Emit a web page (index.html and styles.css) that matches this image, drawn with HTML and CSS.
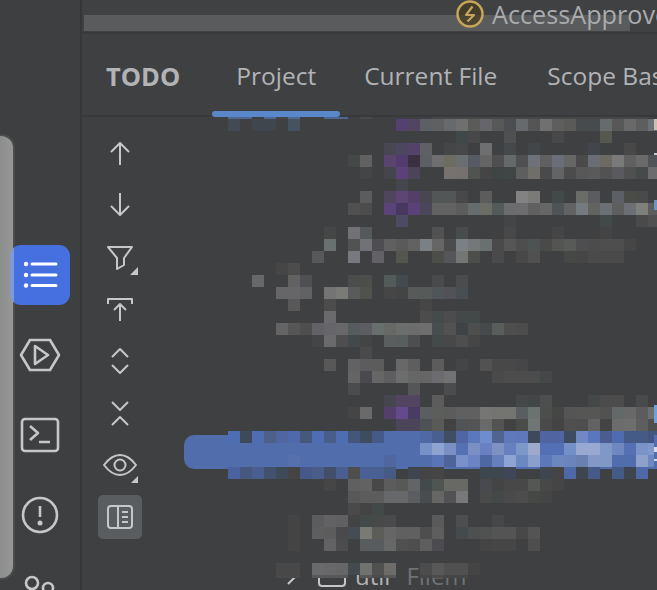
FILE: index.html
```html
<!DOCTYPE html>
<html>
<head>
    <meta charset="UTF-8">
    <meta name="viewport" content="width=device-width, initial-scale=1.0">
    <title>TODO</title>
    <link rel="stylesheet" href="styles.css">
</head>
<body>
    <div class="rail">
        <div class="rail-handle"></div>
        <button class="rail-btn rail-btn-on">
            <svg viewBox="0 0 60 60">
                <path d="M22 19H46M22 30H46M22 40.5H46" class="line-white"/>
                <circle cx="16" cy="19" r="2.2" class="dot-white"/>
                <circle cx="16" cy="30" r="2.2" class="dot-white"/>
                <circle cx="16" cy="40.5" r="2.2" class="dot-white"/>
            </svg>
        </button>
        <button class="rail-btn">
            <svg viewBox="0 0 60 60">
                <path d="M20 15H40L49 30L40 45H20L11 30Z" class="line-thick"/>
                <path d="M25 21L38 30L25 39Z" class="line-thick"/>
            </svg>
        </button>
        <button class="rail-btn">
            <svg viewBox="0 0 60 60">
                <rect x="12" y="14" width="36" height="32" rx="3" class="line-thick"/>
                <path d="M20 21L28 28L20 35M29 37H40" class="line-thick"/>
            </svg>
        </button>
        <button class="rail-btn">
            <svg viewBox="0 0 60 60">
                <circle cx="30" cy="30" r="17" class="line-thick"/>
                <path d="M30 21V32" class="line-thick"/>
                <circle cx="30" cy="38" r="2.5" class="dot-grey"/>
            </svg>
        </button>
        <button class="rail-btn">
            <svg viewBox="0 0 60 60">
                <circle cx="22" cy="18" r="6" class="line-thick"/>
                <circle cx="38" cy="23" r="5" class="line-thick"/>
                <path d="M11 38C11 30 33 30 33 38" class="line-thick"/>
            </svg>
        </button>
    </div>

    <div class="main">
        <div class="topbar">
            <div class="search-bar"></div>
            <div class="crumb">
                <svg class="crumb-icon" viewBox="0 0 28 28">
                    <circle cx="14" cy="14" r="12.5" class="bolt-ring"/>
                    <path d="M16.5 6.5L10 15H18L11.5 21.5" class="bolt"/>
                </svg>
                <span>AccessApprove</span>
            </div>
        </div>

        <div class="tabs">
            <span class="tabs-title">TODO</span>
            <span class="tab tab-on">Project</span>
            <span class="tab">Current File</span>
            <span class="tab tab-last">Scope Based</span>
        </div>

        <div class="content">
            <div class="tools">
                <button class="tool">
                    <svg viewBox="0 0 44 44"><path d="M22 35V13M13 22L22 13L31 22" class="line"/></svg>
                </button>
                <button class="tool">
                    <svg viewBox="0 0 44 44"><path d="M22 11V33M13 24L22 33L31 24" class="line"/></svg>
                </button>
                <button class="tool">
                    <svg viewBox="0 0 44 44">
                        <path d="M10 13H34L26 24V31L19 35V24Z" class="line"/>
                        <path d="M40 33V41H32Z" class="fill"/>
                    </svg>
                </button>
                <button class="tool">
                    <svg viewBox="0 0 44 44"><path d="M10 18V13H34V18M22 35V18M16 24L22 18L28 24" class="line"/></svg>
                </button>
                <button class="tool">
                    <svg viewBox="0 0 44 44"><path d="M14 19L22 11L30 19M14 27L22 35L30 27" class="line"/></svg>
                </button>
                <button class="tool">
                    <svg viewBox="0 0 44 44"><path d="M14 12L22 20L30 12M14 35L22 27L30 35" class="line"/></svg>
                </button>
                <button class="tool">
                    <svg viewBox="0 0 44 44">
                        <path d="M6 23C12 15 17 13 22 13S32 15 38 23C32 31 27 33 22 33S12 31 6 23Z" class="line"/>
                        <circle cx="22" cy="23" r="5.5" class="line"/>
                        <path d="M40 34V41H33Z" class="fill"/>
                    </svg>
                </button>
                <button class="tool tool-on">
                    <svg viewBox="0 0 44 44">
                        <rect x="10" y="11" width="24" height="22" rx="3" class="line"/>
                        <path d="M20 11V33M24 17H30M24 22H30M24 27H30" class="line"/>
                    </svg>
                </button>
            </div>

            <div class="tree">
                <div class="tree-selected"></div>
                <div class="tree-row">
                    <svg class="tree-arrow" viewBox="0 0 14 18"><path d="M3 1L11 9L3 17" class="line"/></svg>
                    <svg class="tree-folder" viewBox="0 0 28 22"><rect x="1" y="1" width="26" height="20" rx="3" class="line"/></svg>
                    <span class="tree-name">util</span>
                    <span class="tree-note">Filem</span>
                </div>
                <div class="mosaic" id="mosaic"></div>
                <div class="tree-edge"></div>
            </div>
        </div>
    </div>

    <script src="mosaic.js"></script>
</body>
</html>
```

FILE: styles.css
```css
* {
    box-sizing: border-box;
}
html, body {
    height: 100%;
}
body {
    margin: 0;
    display: flex;
    overflow: hidden;
    background-color: #3f4042;
    font-family: "Open Sans", "Noto Sans", sans-serif;
    color: #b1b3b5;
}
button {
    border: none;
    padding: 0;
    background: none;
    display: block;
}
svg {
    display: block;
}

/* left rail */
.rail {
    position: relative;
    flex: 0 0 82px;
    padding: 245px 0 0 10px;
    display: flex;
    flex-direction: column;
    gap: 20px;
    overflow: hidden;
    background-color: #3e3f41;
    border-right: 2px solid #353638;
}
.rail-handle {
    position: absolute;
    left: 0;
    top: 134px;
    width: 15px;
    height: 446px;
    background: linear-gradient(90deg, #8c8d8d, #979797);
    border: solid #4c4c4d;
    border-width: 2px 2px 2px 0;
    border-radius: 0 14px 14px 0;
}
.rail-btn {
    position: relative;
    flex: 0 0 60px;
    width: 60px;
    height: 60px;
    border-radius: 11px;
}
.rail-btn-on {
    background: linear-gradient(90deg, #7f9ad8 4px, #4670e0 4px);
}

/* icon strokes */
.line, .line-thick, .line-white, .bolt-ring, .bolt {
    fill: none;
    stroke-linejoin: round;
}
.line {
    stroke: #c6c7c9;
    stroke-width: 2;
}
.line-thick {
    stroke: #c6c7c9;
    stroke-width: 2.6;
}
.line-white {
    stroke: #fff;
    stroke-width: 3;
    stroke-linecap: round;
}
.dot-white {
    fill: #fff;
}
.dot-grey, .fill {
    fill: #c6c7c9;
}

.main {
    flex: 1;
    min-width: 0;
    overflow: hidden;
    display: flex;
    flex-direction: column;
}

/* top strip */
.topbar {
    position: relative;
    flex: 0 0 34px;
    padding: 15px 27px 1px 2px;
    overflow: hidden;
    border-bottom: 2px solid #38393b;
    background-color: #404143;
}
.search-bar {
    height: 16px;
    background-color: #5a5b5c;
}
.crumb {
    position: absolute;
    left: 374px;
    top: -3px;
    display: flex;
    align-items: center;
    gap: 8px;
    font-size: 25.2px;
    white-space: nowrap;
    color: #a9abae;
}
.crumb-icon {
    width: 28px;
    height: 28px;
}
.bolt-ring {
    stroke: #c9a45c;
    stroke-width: 2.5;
    fill: rgba(70, 60, 35, 0.75);
}
.bolt {
    stroke: #c9a45c;
    stroke-width: 2.2;
}

/* tabs */
.tabs {
    flex: 0 0 83px;
    padding: 0 0 0 24px;
    display: flex;
    align-items: stretch;
    white-space: nowrap;
    border-bottom: 2px solid #38393b;
    font-size: 24.5px;
}
.tabs-title {
    display: flex;
    align-items: center;
    margin-right: 32px;
    padding-top: 2px;
    font-size: 25.5px;
    font-weight: bold;
}
.tab {
    position: relative;
    display: flex;
    align-items: center;
    padding: 2px 24px 0;
}
.tab-last {
    padding-left: 26px;
}
.tab-on::after {
    content: "";
    position: absolute;
    left: 0;
    right: 0;
    bottom: -2px;
    height: 6px;
    border-radius: 3px;
    background-color: #5a87c9;
}

/* tool column and tree */
.content {
    flex: 1;
    min-height: 0;
    display: flex;
}
.tools {
    flex: 0 0 78px;
    padding: 13px 0 0 16px;
    display: flex;
    flex-direction: column;
    gap: 8px;
}
.tool {
    width: 44px;
    height: 44px;
    border-radius: 5px;
}
.tool-on {
    margin-top: 1px;
    background-color: #5a5d5f;
}
.tree {
    position: relative;
    flex: 1;
    min-width: 0;
    overflow: hidden;
}
.tree-selected {
    height: 34px;
    margin: 318px 0 0 24px;
    border-radius: 10px 0 0 10px;
    background-color: #526dab;
}
.tree-row {
    margin: 90px 0 0 125px;
    display: flex;
    align-items: center;
    font-size: 24px;
    white-space: nowrap;
}
.tree-arrow {
    width: 14px;
    height: 18px;
    margin-right: 19px;
}
.tree-folder {
    width: 28px;
    height: 22px;
    margin-right: 9px;
}
.tree-note {
    margin-left: 16px;
    color: #707173;
}
.mosaic {
    position: absolute;
    left: 68px;
    top: -10px;
    height: 471px;
    overflow: hidden;
    display: grid;
    grid-template-columns: repeat(36, 12px);
    grid-auto-rows: 12px;
}
.tree-edge {
    position: absolute;
    right: 0;
    top: 0;
    bottom: 0;
    width: 3px;
    background: linear-gradient(180deg,
        transparent 2px, #c8bfae 2px, #c8bfae 13px, transparent 13px,
        transparent 36px, #c8c8cc 36px, #c8c8cc 38px, transparent 38px,
        transparent 83px, #6f93c0 83px, #6f93c0 93px, transparent 93px,
        transparent 288px, #6fa0d8 288px, #6fa0d8 306px, transparent 306px,
        transparent 318px, #526dab 318px, #526dab 330px, #d5dbe8 330px, #d5dbe8 335px,
        #526dab 335px, #526dab 342px, #d5dbe8 342px, #d5dbe8 344px, #526dab 344px, #526dab 352px, transparent 352px);
}
```

FILE: mosaic.js
```js
// blurred tree rows: [first column, cells]
// two digits = grey (5f -> #5f5f5f), six digits = colour, "." = empty
const firstCol = 19;
const sel = '526dab';
const rows = [
    [19, '506794 506794 . 506794 46 506794 . . 4f6694 4f6694 . 4a . . . . . 47 47 47 47 47 47 47 47 47 47 47 47 47 47 47 47 47 47'],
    [19, '424a53 . 3f464d 3f464d . 46525f . . . . . . . . 54416f 514560 5c5f63 5f6062 666a6d 6f6f6e 5b5b59 65656a 58 4d4e51 666a6d 55 70 5e 5a5a58 474b4e 464b4e 666c6c 58 69 5e 6a707a'],
    [38, '41484a 48 . . 50 . . . 48 . . . 565850'],
    [32, '484650 4d4660 534369 5f6063 . 444647 48 . 6e6f70 . 45494b . 434648 . . . . 42464a . . 48'],
    [29, '444847 61 . 58446f 533b6e 3a3040 5c6064 6f6f70 6c6c62 6b6e70 555a63 65 4f 65696a 505052 6e7278 60 6a6e78 666664 4a 6a6e74 6c6a62 7a 60 6a 505458'],
    [30, '45 . 45454c 5a4278 4c4458 . . 777270 75716e 515350 45 3f4445 424545 5e 706e6b 4a 626466 4c 58 5a 52 5a5a5e 50 464a4a 6c'],
    [33, '464650'],
    [30, '5c . 50455f 5d4673 533f68 484750 525656 525656 48 . 5c . . 82 7a7a78 . 434848 . 6a6c68 5c5c60 . 5c6064 4a4c48 4a'],
    [29, '50 4c . 5a4378 483860 5a4278 4c465a 62 62 5c5c5a 666c6c 6c6c66 545a5a 6a6c6e 6c6c6e 60 666664 4e5456 62 747a7e 62625e 6a7074 5e 6c7074 7e807c 5c'],
    [33, '4e4a62 . . . . . . . . 45 . . . . . . . 434848 . . 4a 50'],
    [27, '46 . 727276 54595c . . . . . 52 . 484c4c . . . 48 . . . 45 . . . 44'],
    [27, '6a7070 . 52 707276 4e4e52 60 5a 62 7a8084 66 4c 7a8084 747878 6a7070 4a 56 4e 4e5252 4a 545452 585a58 4e4e50 4c 4e 4e 46'],
    [26, '58 . . 78787e . 626266 . 55554f . . 4c4e4a 56565a 747674 4c4e4a . 4a . 48 50 . . 454845 46 4a 4a 4a'],
    [23, '46 4c'],
    [21, '68 . . 62 505054 . . . 4c 4c4e4c . 525a5a 454a4e . . 4a . 4c'],
    [23, '666668 666668 626264 . 74 7a7a76 585a5c 50524e . 46 44 585a5a 565a58 50555a 525256 484e52'],
    [24, '58 . . 4c . . . . . . . 46'],
    [27, '6a6a6c . . . . . . . 4c 454a4a 4c 444848 434848'],
    [23, '64 56 4e 626266 66666a 68686a 565c5e 5c5c62 686e6c 686866 6c6e6e 6c 6e 484e50 52 3e4446 4e 464a4a 5a5e5a 4e 4c'],
    [26, '45 6a6a6c 4e 43484a 44 . 5a5e5e 585e5e 4e . 444a4a 48 4e 46'],
    [30, '4a'],
    [27, '58 . 62 5c5c5e 5c . 68 5e . 5c . 45 . 52 48 48 464648'],
    [29, '64 4a4a4e 66 5e5e60 6c6e6e 66 66 6c6c70 72 . . . 4a 4c 4c 4c 454848'],
    [29, '4c . . . . 56 . . 4c'],
    [32, '464650 524562 524562 . 5c . . . . . . 454848 434646 4e . . . 454848 4c 4c . 4a'],
    [29, '45 6a . 533f6a 634a8a 483c64 5a5e60 5c5e5c 5c 60 60 767674 747472 747470 5a5e60 6c7270 4c4e4c 46 55 565654 565654 52 646868 68 5c 6e'],
    [33, '4c4458 4c4458 4e5254 5a5a58 42 505456 54 6a 525452 42 4a4c4a 707676 4a 44 50 4e 62 44 6c 6e 5e 4e'],
    [19, '4f6db2 3d4a5a 4f6db2 4e5f8a 4f66a0 5069aa 46587c 4f6db2 485d8a 4f6db2 44567a 3e4c60 465a88 ' + sel + ' ' + sel + ' ' + sel + ' 5068a4 4a5f90 404e64 4f66a2 5c78bc 6f8ccc 506492 6079bb 5f78bc 3e4a5a 4f64a0 4f64a0 3f4c60 7088c4 5a76bc 4a5c90 506cb0 465a88 465a88 445480'],
    [35, '7690c8 8fa3d0 7a90c4 5670b4 7a90c4 6a80c0 7e92c2 6680c0 7c98c8 9daacc 5370b4 5370b4 7490c8 98a8d0 98a8d0 8098c8 6f88c0 5670b4 7a94c8 8098cc'],
    [24, '5670ad . . . . . . . 4f66a0 . . . 5a74b8 4e6498 7a90c8 6c84c4 4e68a4 6680bc 8ea4d4 6c88c0 8aa0cc 5c78b8 6c86c0 6c84bc 6a80b0 8498c8 8098c4 . . 8ea0cc 7088c0'],
    [19, '4b62a0 47587e 4a5e90 42526e 3e4a58 44 46588a 4a5c8a 434e68 4a5e90 4e 4a6094 4a6094 465a84 . 3f4650 44 45 . . . 3e4650 3e4650 3f4658 . . 3f4650 44 4e68a8 3f4650 465a88 . 465a88 3f4650 4e68a8'],
    [27, '46 . 60 62 48 5c 585856 626466 444a4c 505452 686864 686864 . 484a4e 44 48 48 555755 48 45'],
    [29, '58 5c 5c 66686a 66686a 5a5e60 484c4e 666664 525254 78 . 4a 444848 4a 4c 454845 45'],
    [29, '4a 44 434848'],
    [24, '44 . 5c5c5e 626264 606062 44 444a4a 484a4a 4a4a4c . . . 5a . 4e . . 454848'],
    [24, '44 . 5e 5c 4a4a4c 454c54 7a7a74 5c5c58 66 60 60 4e 5e . 454a4c 4e5050 505252 54 54 48 54'],
    [24, '44 . . 626264 4c4c4e . 585c5e 585c5e 666868 50 4e4e4c 5e 4c4c50 . . . 44 46 46 . 4e'],
    [19, ''],
    [23, '48 48 . 6a6a6c 68686a 666668 454a4e 707270 50 6e6c68 . . 4c 58 50 50 44'],
    [23, '4a 4a . 58 58 58 . 58 4c 58 . . 46 4c 46 46']
];

const mosaic = document.getElementById('mosaic');
rows.forEach(function(row) {
    const cells = new Array(36).fill(null);
    row[1].split(' ').forEach(function(value, i) {
        if (value && value !== '.') {
            cells[row[0] - firstCol + i] = value;
        }
    });
    cells.forEach(function(value) {
        const cell = document.createElement('div');
        if (value) {
            cell.style.background = '#' + (value.length === 2 ? value + value + value : value);
        }
        mosaic.appendChild(cell);
    });
});
```
